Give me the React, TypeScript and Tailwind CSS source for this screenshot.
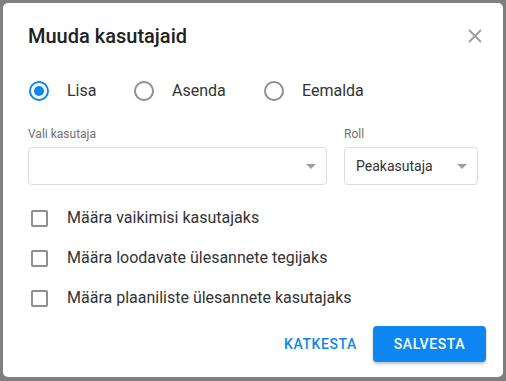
import { useState } from 'react';

const modes = [
  { id: 'add', label: 'Lisa', w: 'w-[105px]' },
  { id: 'replace', label: 'Asenda', w: 'w-[130px]' },
  { id: 'remove', label: 'Eemalda', w: 'w-[120px]' },
];

const options = [
  'Määra vaikimisi kasutajaks',
  'Määra loodavate ülesannete tegijaks',
  'Määra plaaniliste ülesannete kasutajaks',
];

function Caret() {
  return (
    <svg width="10" height="5" viewBox="0 0 10 5" className="shrink-0">
      <path d="M0 0h10L5 5z" fill="#a0a0a0" />
    </svg>
  );
}

export default function App() {
  const [mode, setMode] = useState('add');
  const [checked, setChecked] = useState<boolean[]>([false, false, false]);

  return (
    <div
      className="w-[506px] h-[381px] bg-[#7f7f7f] flex items-start justify-center pt-[3px]"
      style={{ fontFamily: 'Roboto, "Noto Sans", sans-serif' }}
    >
      <div className="w-[500px] h-[374px] bg-white rounded-[5px] flex flex-col">
        {/* Header */}
        <div className="h-[66px] flex items-center justify-between pl-[25px] pr-[20px]">
          <h2 className="text-[20px] font-medium text-[#212121] leading-none">Muuda kasutajaid</h2>
          <button className="w-[16px] h-[16px] flex items-center justify-center">
            <svg width="16" height="16" viewBox="0 0 16 16">
              <path d="M2 2L14 14M14 2L2 14" stroke="#9e9e9e" strokeWidth="2" />
            </svg>
          </button>
        </div>

        {/* Mode radios */}
        <div className="h-[44px] flex items-center pl-[26px]">
          {modes.map((m) => {
            const on = mode === m.id;
            return (
              <label key={m.id} className={`${m.w} flex items-center cursor-pointer`} onClick={() => setMode(m.id)}>
                <span
                  className={`w-[20px] h-[20px] rounded-full border-2 flex items-center justify-center ${
                    on ? 'border-[#0d86f2]' : 'border-[#8e8e8e]'
                  }`}
                >
                  {on && <span className="w-[10px] h-[10px] rounded-full bg-[#0d86f2]" />}
                </span>
                <span className="ml-[18px] text-[16px] text-[#333333]">{m.label}</span>
              </label>
            );
          })}
        </div>

        {/* Selects */}
        <div className="flex gap-[17px] pl-[25px] mt-[13px]">
          <div className="flex flex-col w-[299px]">
            <span className="text-[12px] leading-[16px] text-[#707070]">Vali kasutaja</span>
            <div className="mt-[5px] h-[38px] border border-[#dddddd] rounded-[4px] flex items-center justify-end pr-[10px]">
              <Caret />
            </div>
          </div>
          <div className="flex flex-col w-[134px]">
            <span className="text-[12px] leading-[16px] text-[#707070]">Roll</span>
            <div className="mt-[5px] h-[38px] border border-[#dddddd] rounded-[4px] flex items-center justify-between pl-[11px] pr-[10px]">
              <span className="text-[14px] text-[#333333]">Peakasutaja</span>
              <Caret />
            </div>
          </div>
        </div>

        {/* Checkboxes */}
        <div className="flex flex-col mt-[13px] pl-[28px]">
          {options.map((o, i) => (
            <label
              key={o}
              className="h-[40px] flex items-center cursor-pointer"
              onClick={() => setChecked((c) => c.map((v, j) => (j === i ? !v : v)))}
            >
              <span
                className={`w-[17px] h-[17px] rounded-[2px] border-2 ${
                  checked[i] ? 'border-[#0d86f2] bg-[#0d86f2]' : 'border-[#8e8e8e]'
                }`}
              />
              <span className="ml-[19px] text-[16px] text-[#333333]">{o}</span>
            </label>
          ))}
        </div>

        {/* Actions */}
        <div className="flex justify-end items-center mt-[8px] pr-[17px] gap-[16px]">
          <button className="h-[36px] text-[14px] font-medium tracking-[0.6px] text-[#0d86f2]">KATKESTA</button>
          <button className="h-[36px] w-[113px] rounded-[4px] bg-[#0d86f2] text-white text-[14px] font-medium tracking-[0.6px] shadow-[0_2px_3px_rgba(0,0,0,0.25)]">
            SALVESTA
          </button>
        </div>
      </div>
    </div>
  );
}
